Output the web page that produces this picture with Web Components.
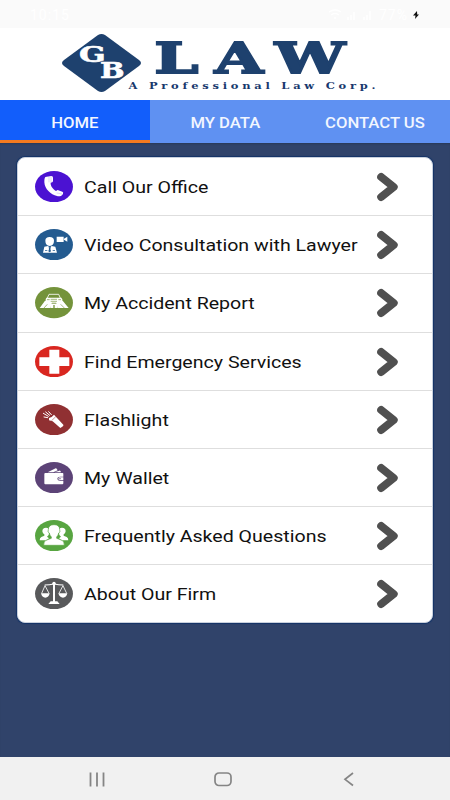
<!DOCTYPE html>
<html lang="en">
<head>
<meta charset="utf-8">
<title>GB Law</title>
<style>
    body {
        margin: 0;
        font-family: Roboto, "Liberation Sans", sans-serif;
    }
</style>
</head>
<body>
<law-app>
    <status-bar slot="top" time="10:15" battery="77%"></status-bar>
    <firm-logo slot="top"></firm-logo>
    <tab-bar slot="top">
        <tab-item active>HOME</tab-item>
        <tab-item>MY DATA</tab-item>
        <tab-item>CONTACT US</tab-item>
    </tab-bar>
    <menu-card>
        <menu-row icon="phone">Call Our Office</menu-row>
        <menu-row icon="video">Video Consultation with Lawyer</menu-row>
        <menu-row icon="car">My Accident Report</menu-row>
        <menu-row icon="cross">Find Emergency Services</menu-row>
        <menu-row icon="torch">Flashlight</menu-row>
        <menu-row icon="wallet">My Wallet</menu-row>
        <menu-row icon="people">Frequently Asked Questions</menu-row>
        <menu-row icon="scales">About Our Firm</menu-row>
    </menu-card>
    <nav-bar slot="bottom"></nav-bar>
</law-app>

<script>
// Round menu icons, all drawn on a 114x94 canvas
const ICONS = {
    phone: {
        color: '#4b12d2',
        art: `<path fill="#fff" d="M31 18l17-3q6-1 6 5v11q-1 4-7 4c-1 9 6 19 16 25l5-3 14 5q4 2 2 6c-3 7-11 9-18 7C47 71 29 54 28 34c0-7 0-12 3-16z"/>
              <path stroke="#4b12d2" stroke-width="1" d="M42 16v18M48 15v19M65 66l16 3" opacity=".5"/>`
    },
    video: {
        color: '#245b90',
        art: `<path fill="#fff" d="M65 23h21v16H65zM87 29l10-6v15l-10-6zM31 35q0-11 13-11t13 11q0 14-13 16-13-2-13-16zM24 71l4-18 11-2 5 5 6-5 11 2 5 18z"/>
              <path fill="#245b90" d="M41 55h7l-2 5 2 7-4 3-4-3 2-7zM30 63h7v2h-7zM53 63h7v2h-7z"/>`
    },
    car: {
        color: '#74933b',
        art: `<path fill="#fff" d="M30 41l-16 22h32l5-18zM83 41l18 22H68l-5-18z"/>
              <path fill="none" stroke="#fff" stroke-width="2.5" d="M37 33l5-11h29l5 11"/>
              <path fill="#fff" d="M34 32h45l3 5v10h-8v5h-7v-5H47v5h-7v-5h-8V37z"/>
              <path stroke="#74933b" stroke-width="2" fill="none" d="M36 38h8M70 38h8M47 37h19M47 43h19M37 52L27 63M77 52l11 11"/>
              <path fill="#fff" d="M46 50h22v13H46z"/>
              <path fill="#74933b" d="M55 54h4v9h-4z"/>`
    },
    cross: {
        color: '#d92720',
        art: '<path fill="#fff" d="M43 11h30v23h30v26H73v23H43V60H13V34h30z"/>'
    },
    torch: {
        color: '#903032',
        art: `<path fill="#fff" d="M42 42q8-1 15-10l7 8 21 22q2 4-9 10L53 52l-11-3z"/>
              <path stroke="#903032" stroke-width="1.5" d="M50 50l13-13"/>
              <path stroke="#fff" stroke-width="3" stroke-linecap="round" d="M38 41l-11-2M40 37L25 28M44 34L32 24M49 32l-8-9"/>`
    },
    wallet: {
        color: '#5c4377',
        art: `<path fill="#fff" d="M31 33h52q2 0 2 2v9H75q-8 0-8 6t8 6h10v8q0 3-3 3H31q-3 0-3-3V36q0-3 3-3z"/>
              <path fill="#fff" d="M38 31l24-12q2-1 3 1l3 5-13 6zM58 31l15-5q4-1 5 5zM75 46h10v8H75q-5 0-5-4t5-4z"/>
              <circle cx="75" cy="50" r="2" fill="#5c4377"/>`
    },
    people: {
        color: '#58a541',
        art: `<path fill="#fff" d="M22 34q0-11 11-11 9 0 10 8l-2 14-5 5 6 5-8 6H14q0-8 5-10l9-4v-4q-5-2-6-9zM92 34q0-11-11-11-9 0-10 8l2 14 5 5-6 5 8 6h20q0-8-5-10l-9-4v-4q5-2 6-9z"/>
              <path fill="#fff" stroke="#58a541" stroke-width="2" d="M40 29q0-15 17-15t17 15l1 7-4 3q-1 8-6 12v4l16 6q7 3 7 15H26q0-12 7-15l16-6v-4q-5-4-6-12l-4-3z"/>`
    },
    scales: {
        color: '#58595b',
        art: `<g fill="none" stroke="#fff" stroke-width="2.5">
                <path stroke-width="3.5" d="M29 21q14 0 28-3 14 3 28 3"/>
                <path d="M30 23L20 46M30 23l12 23M84 23L72 46M84 23l11 23"/>
                <path stroke-width="6" d="M57 17v56"/>
              </g>
              <path fill="#fff" d="M18 46h26q-3 13-13 13T18 46zM70 46h27q-3 13-13 13T70 46zM47 70h20l7 8H40z"/>
              <circle cx="57" cy="16" r="5" fill="#fff"/>`
    }
};

class LawApp extends HTMLElement {
    constructor() {
        super();
        this.attachShadow({ mode: 'open' });
        this.shadowRoot.innerHTML = `
        <style>
        :host {
            display: flex;
            flex-direction: column;
            width: 450px;
            height: 800px;
            overflow: hidden;
            background: #30436a;
        }

        main {
            flex: 1;
            padding: 14px 17px 0;
            box-shadow: inset 0 2px 2px -1px #293958;
        }
        </style>
        <slot name="top"></slot>
        <main><slot></slot></main>
        <slot name="bottom"></slot>
        `;
    }
}

class StatusBar extends HTMLElement {
    constructor() {
        super();
        this.attachShadow({ mode: 'open' });
        this.shadowRoot.innerHTML = `
        <style>
        :host {
            display: flex;
            align-items: center;
            justify-content: space-between;
            box-sizing: border-box;
            height: 28px;
            padding: 2px 30px 0;
            background: #fafafa;
            color: #fff;
            font-size: 14px;
            letter-spacing: 1px;
        }

        .right {
            display: flex;
            align-items: center;
            gap: 5px;
        }
        </style>
        <span>${this.getAttribute('time')}</span>
        <div class="right">
            <svg width="46" height="12" fill="none" stroke="#fff" stroke-width="1.5">
                <path d="M1 3q6-4 12 0M3 6q4-3 8 0M6 9h2M20 11V8M23 11V6M26 11V3M36 11V8M39 11V6M42 11V2"/>
            </svg>
            <span>${this.getAttribute('battery')}</span>
            <svg width="7" height="8"><path fill="#111" d="M4 0L0 4.500h2.500L2 8l4-4.500H4.200z"/></svg>
        </div>
        `;
    }
}

class FirmLogo extends HTMLElement {
    constructor() {
        super();
        this.attachShadow({ mode: 'open' });
        this.shadowRoot.innerHTML = `
        <style>
        :host {
            display: block;
            height: 72px;
            background: #fff;
        }

        svg {
            display: block;
            font-family: "DejaVu Serif", serif;
            font-weight: bold;
        }
        </style>
        <svg width="450" height="72" viewBox="0 28 450 72" fill="#1e416e">
            <path d="M98 35q3.500-2 7 0l34 25q4 3 0 6l-34 25q-3.500 2-7 0L64 66q-4-3 0-6z"/>
            <g fill="#fff" stroke="#fff" stroke-width="0.600" font-size="22">
                <text transform="translate(79 61.500) scale(1.420 1)">G</text>
                <text transform="translate(100 77.500) scale(1.320 1)">B</text>
            </g>
            <text transform="translate(153.500 73.200) scale(1.480 1)" x="0.500 41.300 82" font-size="42.500" stroke="#1e416e" stroke-width="1.800">LAW</text>
            <text transform="translate(128.500 88.500) scale(1.350 1)" font-size="8.500" textLength="183" fill="#17386d">A Professional Law Corp.</text>
        </svg>
        `;
    }
}

class TabBar extends HTMLElement {
    constructor() {
        super();
        this.attachShadow({ mode: 'open' });
        this.shadowRoot.innerHTML = `
        <style>
        :host {
            display: grid;
            grid-template-columns: repeat(3, 1fr);
            height: 43px;
            background: #5f91f2;
        }
        </style>
        <slot></slot>
        `;
    }
}

class TabItem extends HTMLElement {
    constructor() {
        super();
        this.attachShadow({ mode: 'open' });
        this.shadowRoot.innerHTML = `
        <style>
        :host {
            display: flex;
            align-items: center;
            justify-content: center;
            box-sizing: border-box;
            border-bottom: 3px solid transparent;
            padding-top: 5px;
            color: #f2f6ff;
            font-size: 14px;
            font-weight: 500;
            white-space: nowrap;
        }

        :host([active]) {
            background: #125efb;
            border-bottom-color: #f47a20;
        }

        span {
            transform: scaleX(1.190);
        }
        </style>
        <span><slot></slot></span>
        `;
    }
}

class MenuCard extends HTMLElement {
    constructor() {
        super();
        this.attachShadow({ mode: 'open' });
        this.shadowRoot.innerHTML = `
        <style>
        :host {
            display: grid;
            grid-template-rows: 58px 58px 59px repeat(4, 58px) 1fr;
            box-sizing: border-box;
            height: 466px;
            border: 1px solid #c9d0dc;
            border-radius: 8px;
            background: #fff;
            box-shadow: 0 0 1px 1px #143468;
            overflow: hidden;
        }
        </style>
        <slot></slot>
        `;
    }
}

class MenuRow extends HTMLElement {
    constructor() {
        super();
        this.attachShadow({ mode: 'open' });
        const icon = ICONS[this.getAttribute('icon')];
        this.shadowRoot.innerHTML = `
        <style>
        :host {
            display: flex;
            align-items: center;
            padding: 0 33px 0 17px;
            border-bottom: 1px solid #dedede;
            color: #111;
            font-size: 16px;
        }

        :host(:last-child) {
            border-bottom: 0;
        }

        .label {
            flex: 1;
            margin: 1px 0 0 11px;
            white-space: nowrap;
            transform: scaleX(1.223);
            transform-origin: left;
        }

        svg {
            flex: none;
        }
        </style>
        <svg width="38" height="31.300" viewBox="0 0 114 94">
            <ellipse cx="57" cy="47" rx="57" ry="47" fill="${icon.color}"/>
            ${icon.art}
        </svg>
        <span class="label"><slot></slot></span>
        <svg width="23" height="30" viewBox="0 0 23 30">
            <path d="M5.200 5L17.700 15L5.200 25" fill="none" stroke="#505050" stroke-width="8" stroke-linecap="round" stroke-linejoin="round"/>
        </svg>
        `;
    }
}

class NavBar extends HTMLElement {
    constructor() {
        super();
        this.attachShadow({ mode: 'open' });
        this.shadowRoot.innerHTML = `
        <style>
        :host {
            display: grid;
            grid-template-columns: 125px 128px 11px;
            align-items: center;
            box-sizing: border-box;
            height: 43px;
            padding-left: 88px;
            column-gap: 1px;
            background: #f1f1f1;
        }
        </style>
        <svg width="18" height="16"><path stroke="#858585" stroke-width="1.800" d="M2.500 1.500v14M9 1.500v14M15.500 1.500v14"/></svg>
        <svg width="20" height="16"><rect x="1" y="2" width="16" height="12.500" rx="4" fill="none" stroke="#858585" stroke-width="1.700"/></svg>
        <svg width="11" height="16"><path fill="none" stroke="#858585" stroke-width="1.700" d="M10 2L2 8.300l8 6.200"/></svg>
        `;
    }
}

customElements.define('law-app', LawApp);
customElements.define('status-bar', StatusBar);
customElements.define('firm-logo', FirmLogo);
customElements.define('tab-bar', TabBar);
customElements.define('tab-item', TabItem);
customElements.define('menu-card', MenuCard);
customElements.define('menu-row', MenuRow);
customElements.define('nav-bar', NavBar);
</script>
</body>
</html>
